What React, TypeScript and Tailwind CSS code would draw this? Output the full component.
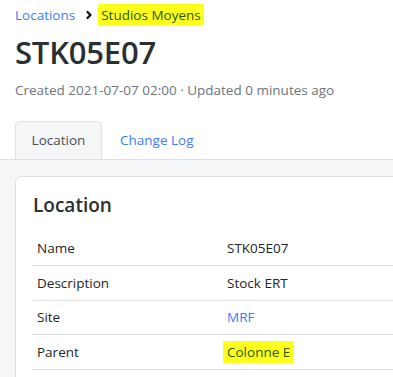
import { ChevronRight } from 'lucide-react'

const rows = [
  { label: 'Name', value: 'STK05E07' },
  { label: 'Description', value: 'Stock ERT' },
  { label: 'Site', value: 'MRF', link: true },
  { label: 'Parent', value: 'Colonne E', marked: true },
]

export default function App() {
  return (
    <div
      className="w-[393px] h-[377px] overflow-hidden bg-white text-[#212529]"
      style={{ fontFamily: '"Open Sans", "Noto Sans", sans-serif' }}
    >
      <div className="w-[440px]">
        {/* Header */}
        <div className="px-[15px] pt-[4px]">
          <div className="flex items-center text-[13.5px] leading-[20px]">
            <span className="text-[#3d7cf5]">Locations</span>
            <ChevronRight className="w-[12px] h-[12px] ml-[8px] mr-[6px] text-[#111]" strokeWidth={4.5} />
            <span className="bg-[#ffff1e] px-[3px] -ml-[3px] py-[1px] rounded-[2px] text-[#2a5a00]">Studios Moyens</span>
          </div>
          <h1 className="text-[31px] leading-[40px] font-semibold mt-[6px] text-[#2b2f33] tracking-[-0.2px]">STK05E07</h1>
          <p className="text-[13.5px] text-[#6c757d] mt-[8px] leading-[20px]">
            Created 2021-07-07 02:00 · Updated 0 minutes ago
          </p>
        </div>

        {/* Tabs */}
        <div className="flex mt-[21px] px-[15px] border-b border-[#dee2e6] text-[13.5px]">
          <div className="w-[87px] h-[38px] -mb-px flex items-center justify-center bg-[#f5f6f8] border border-[#dee2e6] border-b-[#f5f6f8] rounded-t-[5px] text-[#495057]">
            Location
          </div>
          <div className="px-[18px] h-[38px] flex items-center text-[#3d7cf5]">Change Log</div>
        </div>

        {/* Body */}
        <div className="bg-[#f5f6f8] px-[15px] pt-[16px] pb-[20px]">
          <div className="bg-white border border-[#dee2e6] rounded-[6px] px-[16px] pt-[14px] pb-[16px]">
            <h2 className="text-[19px] leading-[28px] font-semibold text-[#2b2f33] pl-[1px]">Location</h2>
            <table className="w-full mt-[12px] text-[13.5px]">
              <tbody>
                {rows.map((r) => (
                  <tr key={r.label} className="border-b border-[#dee2e6]">
                    <td className="w-[191px] px-[5px] h-[34.5px] align-middle">{r.label}</td>
                    <td className="px-[4px] align-middle">
                      {r.link ? (
                        <span className="text-[#3d7cf5]">{r.value}</span>
                      ) : r.marked ? (
                        <span className="bg-[#ffff1e] px-[4px] -ml-[4px] py-[2px] text-[#2a5a00]">{r.value}</span>
                      ) : (
                        r.value
                      )}
                    </td>
                  </tr>
                ))}
              </tbody>
            </table>
          </div>
        </div>
      </div>
    </div>
  )
}
